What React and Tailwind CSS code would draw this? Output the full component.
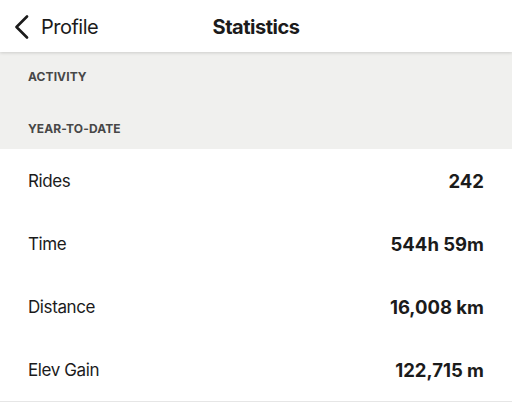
const stats = [
  { label: 'Rides', value: '242' },
  { label: 'Time', value: '544h 59m' },
  { label: 'Distance', value: '16,008 km' },
  { label: 'Elev Gain', value: '122,715 m' },
];

function App() {
  return (
    <div className="w-[512px] h-[403px] overflow-hidden bg-white font-['Inter',sans-serif] text-[#1b1b1b]">
      {/* Header */}
      <header className="relative z-10 h-[52px] flex items-center bg-white shadow-[0_1px_3px_rgba(0,0,0,0.15)]">
        <div className="flex items-center pl-[14px] gap-[11px] w-[160px] pt-[1px]">
          <svg width="16" height="24" viewBox="0 0 16 24" fill="none">
            <polyline
              points="13,1.5 2.5,12 13,22.5"
              stroke="#1b1b1b"
              strokeWidth="2.6"
              strokeLinecap="round"
              strokeLinejoin="round"
            />
          </svg>
          <span className="text-[20px] tracking-[-0.5px]">Profile</span>
        </div>
        <h1 className="absolute left-0 right-0 pt-[2px] text-center text-[20px] font-bold tracking-[-0.5px] pointer-events-none">
          Statistics
        </h1>
      </header>

      {/* Section headers */}
      <div className="bg-[#f0f0ee] pt-[17px] pb-[12px] px-[28px]">
        <p className="text-[12px] leading-[16px] font-bold text-[#474747] tracking-[0.1px]">ACTIVITY</p>
        <p className="mt-[36px] text-[12px] leading-[16px] font-bold text-[#474747] tracking-[0.1px]">YEAR-TO-DATE</p>
      </div>

      {/* Rows */}
      <div className="border-b border-[#e6e6e6]">
        {stats.map((s) => (
          <div key={s.label} className="h-[63px] pt-[2px] flex items-center justify-between px-[28px]">
            <span className="text-[17px] tracking-[-0.4px]">{s.label}</span>
            <span className="text-[18.5px] font-bold">{s.value}</span>
          </div>
        ))}
      </div>
    </div>
  );
}

export default App;
